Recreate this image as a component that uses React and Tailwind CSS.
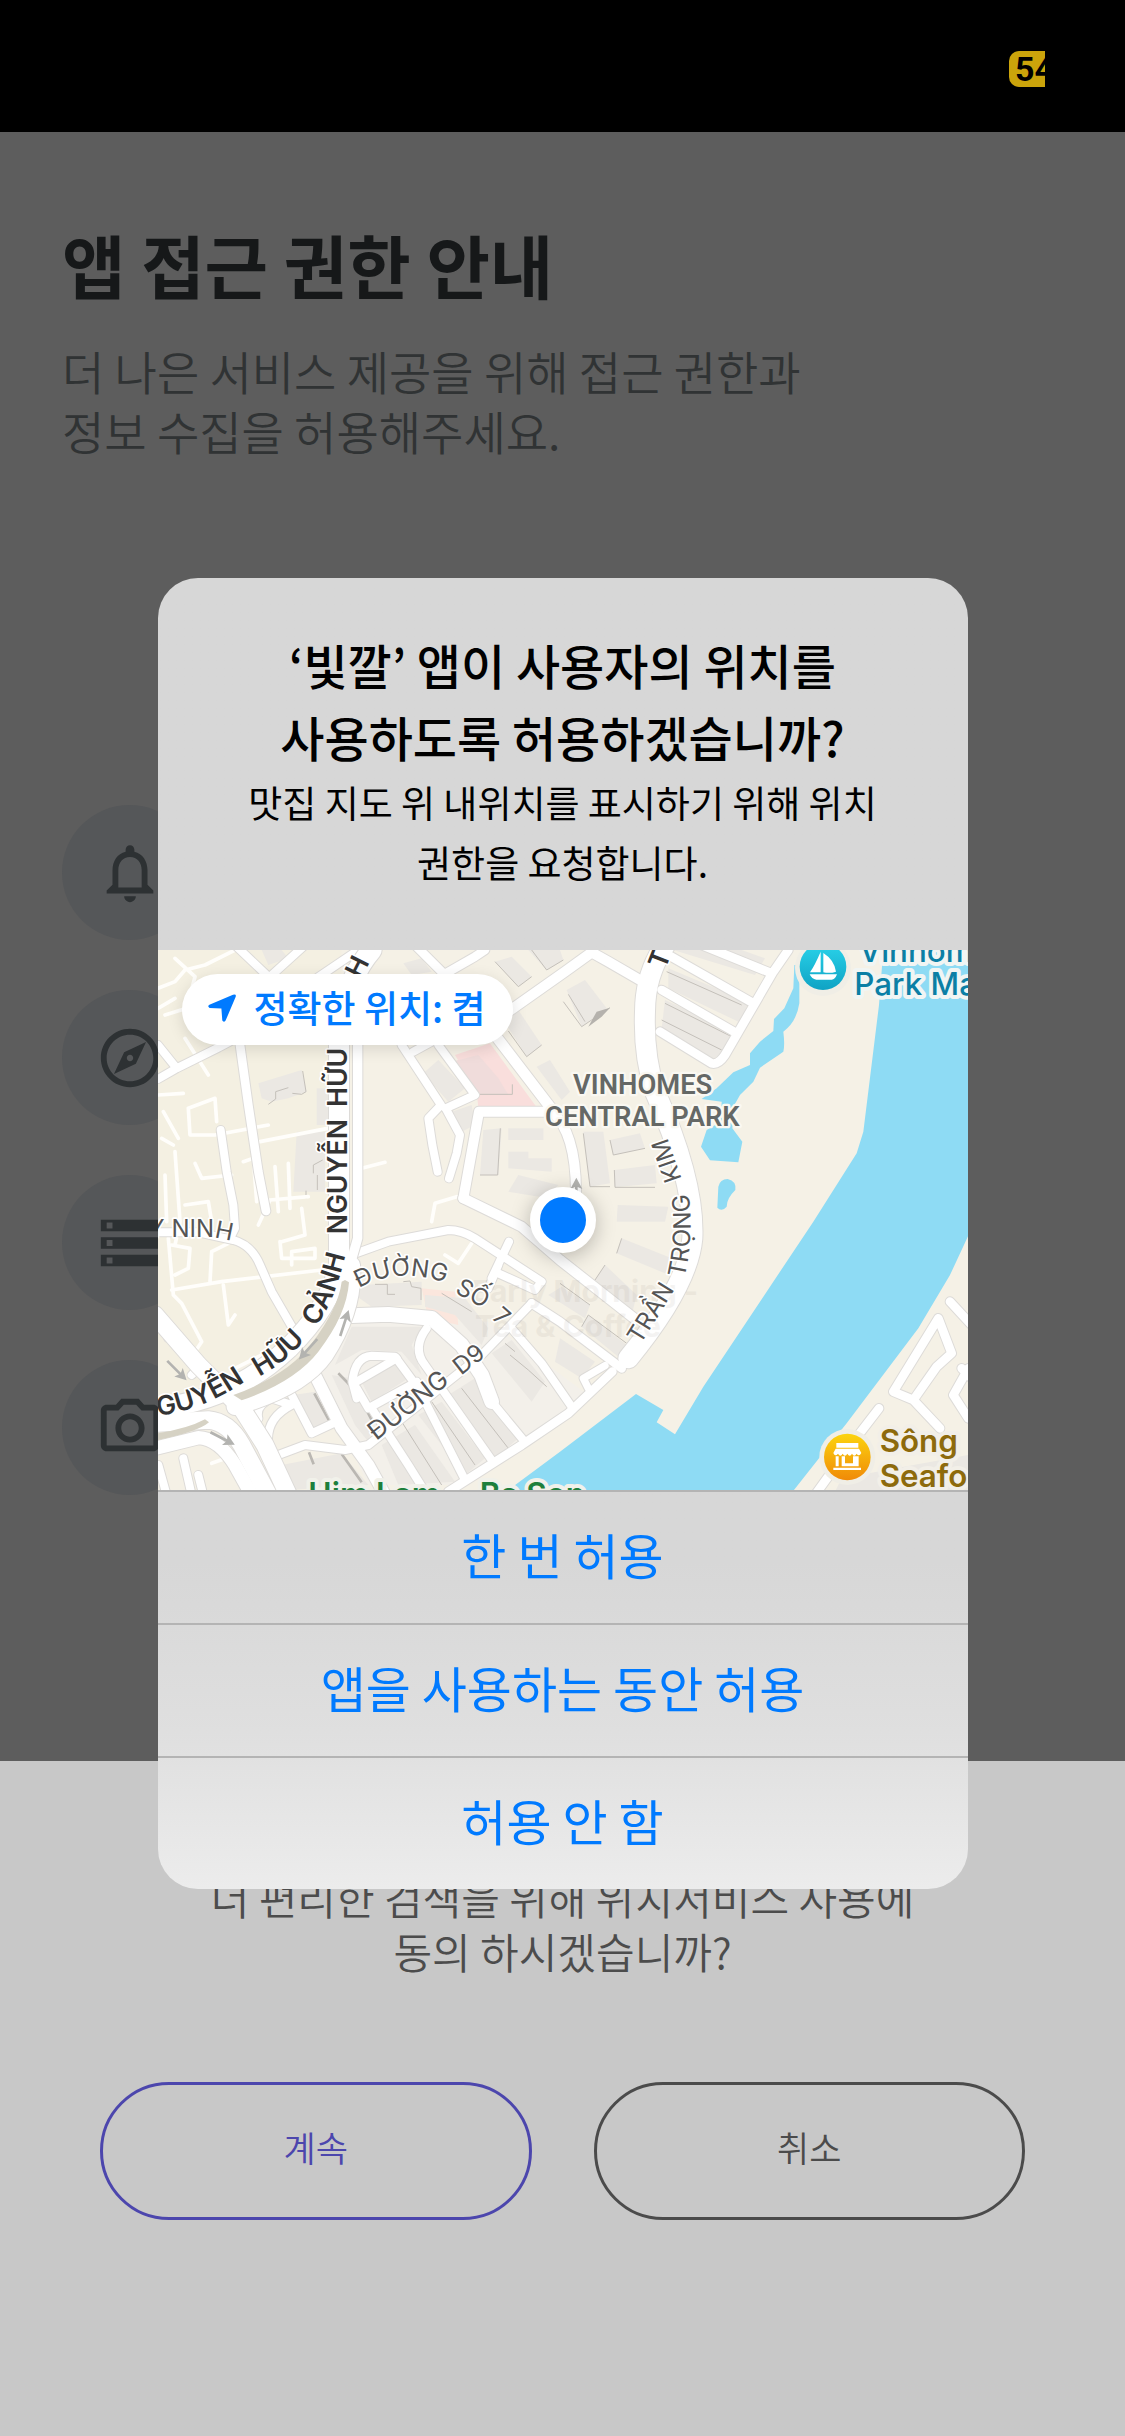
import React from "react";
import {
  MdNotificationsNone,
  MdOutlineExplore,
  MdStorage,
  MdOutlinePhotoCamera,
} from "react-icons/md";

const permissions = [
  { label: "알림", Icon: MdNotificationsNone },
  { label: "위치", Icon: MdOutlineExplore },
  { label: "저장공간", Icon: MdStorage },
  { label: "카메라", Icon: MdOutlinePhotoCamera },
];

const choices = ["한 번 허용", "앱을 사용하는 동안 허용", "허용 안 함"];

const buildings = [
  "M310 415 L440 375 L455 440 L400 460 L350 470 L320 460Z",
  "M425 560 L510 560 L510 740 L415 740Z",
  "M485 430 L520 430 L520 540 L485 540Z",
  "M1020 50 L1070 35 L1130 95 L1090 125Z",
  "M1120 15 L1215 15 L1225 45 L1175 75Z",
  "M1045 225 L1090 195 L1160 300 L1115 335Z",
  "M1145 365 L1185 345 L1245 440 L1220 465Z",
  "M320 15 L380 15 L400 40 L340 60Z",
  "M745 55 L800 40 L830 80 L770 90Z",
  "M805 385 L850 345 L930 430 L880 470Z",
  "M890 500 L950 480 L960 540 L920 560Z",
  "M985 555 L1040 550 L1030 690 L975 690Z",
  "M1060 550 L1165 550 L1165 585 L1060 585Z",
  "M1060 620 L1120 620 L1120 640 L1190 640 L1190 680 L1060 670Z",
  "M1090 690 L1210 720 L1180 760 L1060 740Z",
  "M1235 135 L1290 105 L1355 190 L1280 245Z",
  "M1285 560 L1345 560 L1365 715 L1305 725Z",
  "M1365 585 L1455 565 L1470 610 L1375 630Z",
  "M1378 675 L1500 660 L1505 715 L1380 727Z",
  "M1388 780 L1540 785 L1530 830 L1385 830Z",
  "M1400 880 L1550 940 L1530 985 L1385 925Z",
  "M1350 960 L1445 1050 L1430 1110 L1320 1005Z",
  "M1300 1110 L1415 1200 L1395 1240 L1280 1145Z",
  "M1220 1025 L1305 1080 L1290 1120 L1180 1050Z",
  "M1540 70 L1780 170 L1760 235 L1540 130Z",
  "M1555 15 L1760 15 L1830 40 L1800 90Z",
  "M1530 165 L1740 260 L1710 320 L1660 350 L1520 250Z",
  "M600 1050 L620 1020 L800 1010 L800 1080 L650 1085Z",
  "M810 1050 L930 1060 L1000 1150 L980 1200 L900 1110 L810 1085Z",
  "M590 1145 L800 1145 L770 1200 L800 1290 L740 1220 L620 1215 L540 1260Z",
  "M530 1290 L590 1300 L655 1430 L640 1490 L600 1440Z",
  "M415 1350 L480 1340 L530 1430 L475 1455Z",
  "M620 1310 L720 1245 L760 1300 L650 1370Z",
  "M680 1500 L780 1440 L900 1610 L730 1620Z",
  "M790 1410 L860 1370 L990 1540 L930 1590Z",
  "M880 1350 L960 1300 L1090 1480 L1020 1540Z",
  "M1010 1225 L1070 1185 L1170 1310 L1130 1370Z",
  "M380 1560 L560 1525 L640 1620 L400 1635Z",
  "M1215 1180 L1320 1250 L1280 1300 L1200 1250Z",
  "M2060 1600 L2440 1530 L2440 1640 L2040 1640Z",
];

const buildingEdges = [
  "M340 478 L362 462 V440 L400 428 M443 378 L453 440 L440 448 L412 445",
  "M475 685 V660 L503 645 M487 690 V735 M453 737 V760",
  "M1020 50 L1090 125 L1130 95 M1130 15 L1175 75 L1225 45",
  "M1060 258 L1115 335 L1160 300 M975 448 H1072 V418",
  "M1036 550 L1028 690 H975 M1240 148 L1290 230 M1225 170 L1280 245 L1365 188",
  "M1365 585 L1375 630 L1470 610 M1378 675 L1380 727 H1500 M1285 565 L1305 725 H1365",
  "M1320 1005 L1350 960 M1280 1145 L1300 1110 L1415 1195 M1215 1015 L1305 1080 M1385 925 L1400 880",
  "M660 1018 H697 V1048 H720 M745 1010 L765 1008 L770 1025 L798 1030 V1065",
  "M860 1045 L950 1100 M1050 1195 L1080 1220 M1065 1230 L1120 1275 L1175 1325",
  "M1540 35 L1770 150 M1535 80 L1760 180 M1530 175 L1730 275 M1520 225 L1700 315",
  "M740 1430 L860 1620 M830 1370 L960 1560 M920 1330 L1060 1510",
];

const minorRoads = [
  "M9 130 L60 110 L90 75 L150 60 L240 15 M60 40 L120 95 L95 190 L30 210 M9 190 L60 160",
  "M90 280 L160 390 M9 450 L85 445 M25 500 L70 580 M20 580 L55 600",
  "M100 490 L180 460 L185 530 M100 490 L105 570 L180 570 L340 540",
  "M60 620 L75 830 L60 900 M120 655 L140 700 L230 690 M30 690 L35 830",
  "M90 780 L160 770 L170 830 M265 650 L295 640 L305 770 M315 590 L545 545 M620 670 L690 652",
  "M360 665 L370 800 M400 655 L405 790 M310 840 L345 765 L460 755",
  "M40 880 L55 1050 L80 1075 L140 1190 L100 1250 L125 1290 M60 990 L100 970 L105 910 L50 900",
  "M50 1035 L200 1010 L500 975 M165 1010 L170 920 L220 895 M205 1020 L220 1140 L240 1110",
  "M380 890 L450 870 M410 960 V920 L480 910 V940 H380 L375 890 M440 790 L450 870",
  "M830 830 L840 775 L905 755 M870 930 L910 955 L950 895 M240 1270 L420 1180",
  "M170 1555 L225 1535",
];

const roads = [
  { w: 24, d: "M9 300 L65 370 M9 402 L65 370 L190 308 L262 270" },
  { w: 24, d: "M240 0 L340 95 M450 0 L345 95 M470 110 L610 15" },
  { w: 26, d: "M255 300 L280 480 L310 680 L333 798" },
  { w: 24, d: "M197 555 L215 680 L235 780 L240 850 L225 880" },
  { w: 24, d: "M0 862 H130 L235 885 Q290 900 315 960 L350 1040 L425 1170" },
  { w: 26, d: "M780 0 L868 88 L960 35 L990 15 M868 88 L800 150" },
  { w: 30, d: "M1060 200 L1230 80 L1310 22 L1360 50 L1460 108" },
  { w: 32, d: "M1020 270 L1190 492" },
  { w: 24, d: "M740 300 L858 480 L820 520 L832 600 L848 680 M872 490 L915 570 L905 625 L882 700" },
  { w: 24, d: "M850 300 L960 450 L872 490 M775 320 L830 290" },
  { w: 30, d: "M925 760 L972 500 H1190 Q1262 560 1263 740" },
  { w: 30, d: "M925 760 L1100 845 L1215 945 L1440 1122" },
  { w: 24, d: "M595 928 L700 890 L880 855 Q920 855 960 880 L1160 1010 L1140 1035 L1030 985" },
  { w: 24, d: "M1062 890 L1010 1000 M1030 960 L1000 1030" },
  { w: 44, d: "M590 1112 L700 1108 L830 1120 L920 1200 L980 1290 L1010 1370" },
  { w: 24, d: "M1010 1370 L1105 1485" },
  { w: 24, d: "M815 1150 Q770 1210 810 1260 L1010 1545" },
  { w: 24, d: "M605 1360 L592 1310 Q600 1235 650 1232 L720 1235 L790 1330 L925 1595" },
  { w: 24, d: "M605 1330 L640 1390 M640 1390 L785 1310 M605 1310 L725 1240 M650 1390 L760 1560 L810 1640" },
  { w: 36, d: "M480 1290 L560 1450 L640 1560 L690 1650" },
  { w: 24, d: "M370 1530 L450 1500 L570 1515 L640 1500 L980 1230 L1130 1075" },
  { w: 26, d: "M1130 1075 L1215 1130 L1400 1270" },
  { w: 24, d: "M1065 1145 L1160 1255 L1250 1385" },
  { w: 26, d: "M880 1640 L1100 1500 L1240 1405 L1372 1280" },
  { w: 22, d: "M1300 1330 L1285 1300 L1350 1262" },
  { w: 24, d: "M410 1350 L470 1465 L545 1430 M310 1420 Q300 1380 350 1360 L410 1380 Q330 1420 340 1500" },
  { w: 24, d: "M0 1115 L60 1160 L40 1180 M130 1270 L110 1290" },
  { w: 24, d: "M85 1540 L110 1650 M130 1590 L145 1650 M10 1560 L35 1650" },
  { w: 60, d: "M1530 0 Q1470 90 1470 200 Q1465 330 1500 440 Q1620 710 1612 880 Q1600 1020 1420 1240" },
  { w: 26, d: "M1515 260 L1670 355 Q1690 360 1710 330 L1855 80 L1900 15 M1520 135 L1740 262 M1540 30 L1790 172 M1640 0 L1850 85" },
  { w: 26, d: "M2385 1070 L2450 1140 M2350 1120 L2215 1340 L2275 1365 L2355 1450 M2350 1120 L2390 1225 L2345 1265 L2275 1365" },
  { w: 26, d: "M2172 1390 L2095 1490 L1980 1650 M2440 1270 L2395 1350 L2440 1420 M2420 1270 L2450 1300" },
];

const avenue = [
  { w: 60, d: "M0 1390 Q230 1370 400 1210 Q530 1080 552 960 V300 Q560 120 650 15" },
  { w: 28, d: "M608 180 V880 L585 960" },
  { w: 50, d: "M590 960 Q600 1090 510 1230 Q440 1330 240 1385" },
  { w: 52, d: "M0 1435 L160 1425 Q220 1430 260 1500 L340 1650" },
  { w: 52, d: "M0 1110 L130 1260 L260 1390 L330 1500 L400 1650" },
  { w: 40, d: "M0 1510 L130 1478 Q190 1480 240 1560 L290 1650" },
];

function Roads({ items }) {
  return (
    <g fill="none" strokeLinecap="round" strokeLinejoin="round">
      {items.map((r) => (
        <path key={r.d} d={r.d} stroke="#dddbd8" strokeWidth={r.w + 6} />
      ))}
      {items.map((r) => (
        <path key={r.d} d={r.d} stroke="#ffffff" strokeWidth={r.w} />
      ))}
    </g>
  );
}

function Arrow({ x, y, angle }) {
  return (
    <g transform={`translate(${x} ${y}) rotate(${angle})`} fill="#b3b3b0">
      <path d="M-40 -4 H14 L8 -18 L42 0 L8 18 L14 4 H-40Z" />
    </g>
  );
}

function CurvedLabel({ id, size, bold, children }) {
  return (
    <text
      fontSize={size}
      fontWeight={bold ? 600 : 400}
      fill={bold ? "#333333" : "#555555"}
      stroke="#ffffff"
      strokeWidth="10"
      strokeLinejoin="round"
      paintOrder="stroke"
    >
      <textPath href={`#${id}`}>{children}</textPath>
    </text>
  );
}

function LocationMap() {
  return (
    <svg
      className="block h-full w-full"
      viewBox="9 15 2430 1620"
      preserveAspectRatio="xMidYMid slice"
      role="img"
      aria-label="현재 위치 지도"
      fontFamily="Inter, 'Noto Sans', sans-serif"
    >
      <defs>
        <linearGradient id="marina" x1="0" y1="0" x2="0" y2="1">
          <stop offset="0" stopColor="#2ad3ea" />
          <stop offset="1" stopColor="#0fa3c4" />
        </linearGradient>
        <linearGradient id="market" x1="0" y1="0" x2="0" y2="1">
          <stop offset="0" stopColor="#fcd40f" />
          <stop offset="1" stopColor="#f08a08" />
        </linearGradient>
        <path id="ninh" d="M-20 877 L170 877 Q230 882 300 915" />
        <path id="canh1" d="M482 1146 Q545 1060 576 905" />
        <path id="canh2" d="M312 1294 Q400 1250 470 1160" />
        <path id="canh3" d="M8 1412 Q160 1396 310 1280" />
        <path id="nguyen" d="M575 868 V490" />
        <path id="huu" d="M577 486 V250" />
        <path id="h" d="M618 104 L660 20" />
        <path id="so" d="M612 1030 Q730 960 890 1020" />
        <path id="so2" d="M898 1042 L1040 1120" />
        <path id="so3" d="M1008 1120 L1060 1165" />
        <path id="d9" d="M664 1488 L900 1302" />
        <path id="d9b" d="M918 1292 L1020 1212" />
        <path id="tran" d="M1456 1200 L1580 1000" />
        <path id="trong" d="M1588 1000 Q1620 860 1598 730" />
        <path id="kim" d="M1580 702 L1520 530" />
        <path id="t" d="M1530 76 L1560 0" />
      </defs>

      <rect x="0" y="0" width="2450" height="1650" fill="#f5f1e6" />
      <path d="M0 0 H560 V1000 L400 1200 L0 1380Z" fill="#f4f0e2" />
      <path
        d="M600 1130 L1000 1130 L1300 1350 L900 1620 L640 1620 L480 1290Z"
        fill="#f3f0ea"
      />
      <path d="M900 330 L1005 295 L1145 487 H970 L965 440Z" fill="#f9dedc" />
      <path d="M890 350 L970 330 L1030 400 L1060 450 L975 448Z" fill="#f0dcdb" />
      <path d="M800 1030 L900 1040 L910 1140 L820 1120Z" fill="#fbe6dd" />
      <g fill="#ebe8e3">
        {buildings.map((d) => (
          <path key={d} d={d} />
        ))}
      </g>
      <g fill="none" stroke="#c4c0ba" strokeWidth="3">
        {buildingEdges.map((d) => (
          <path key={d} d={d} />
        ))}
      </g>
      <path
        d="M550 1285 Q610 1340 650 1425 M478 1345 L524 1430 M462 1522 L476 1558 M560 1527 L620 1612"
        fill="none"
        stroke="#bab7b2"
        strokeWidth="8"
      />
      <path d="M1300 245 L1325 200 L1365 188 L1340 215Z" fill="#b5b2ad" />
      <g
        fill="none"
        stroke="#fffefb"
        strokeWidth="11"
        strokeLinecap="round"
        strokeLinejoin="round"
      >
        {minorRoads.map((d) => (
          <path key={d} d={d} />
        ))}
      </g>

      <g fill="#8edbf4">
        <path d="M2186 0 L2172 180 L2125 560 L2105 625 L1975 830 L1775 1130 L1645 1325 L1560 1468 L1505 1432 L1525 1395 L1443 1347 L1215 1520 L1040 1650 H1905 L2075 1435 L2290 1150 L2385 990 L2450 850 V0Z" />
        <path d="M1933 60 L1933 175 Q1925 230 1885 260 Q1890 300 1885 320 L1815 368 L1795 410 L1755 450 L1738 480 L1732 550 L1762 590 L1750 652 L1665 646 L1638 605 L1655 555 L1697 530 L1700 470 L1640 462 L1685 430 L1735 382 L1785 360 L1785 325 L1815 290 L1855 258 L1857 222 L1888 190 L1915 130 L1918 60Z" />
        <path d="M1690 725 Q1695 702 1718 702 Q1745 708 1741 735 Q1715 760 1715 785 Q1700 802 1687 788Z" />
      </g>

      <Roads items={roads} />
      <Roads items={avenue} />
      <path
        d="M570 1005 L582 1012 Q575 1110 490 1220 Q420 1310 260 1366 L235 1350 Q400 1290 470 1195 Q550 1090 560 1010Z"
        fill="#d6d2c4"
      />
      <path d="M9 1465 Q100 1450 150 1423 L162 1432 Q130 1460 9 1485Z" fill="#d6d2c4" />

      <Arrow x={65} y={1276} angle={45} />
      <Arrow x={202} y={1480} angle={27} />
      <Arrow x={460} y={1212} angle={132} />
      <Arrow x={568} y={1135} angle={-72} />
      <Arrow x={1264} y={740} angle={-90} />

      <g fill="#8c8378" opacity="0.09" fontSize="90" fontWeight="700">
        <text x="950" y="1072">Early Morning -</text>
        <text x="960" y="1175">Tea &amp; Coffee</text>
      </g>

      <CurvedLabel id="ninh" size={72}>Y NINH</CurvedLabel>
      <CurvedLabel id="canh3" size={80} bold>GUYỄN</CurvedLabel>
      <CurvedLabel id="canh2" size={80} bold>HỮU</CurvedLabel>
      <CurvedLabel id="canh1" size={80} bold>CẢNH</CurvedLabel>
      <CurvedLabel id="nguyen" size={80} bold>NGUYỄN</CurvedLabel>
      <CurvedLabel id="huu" size={80} bold>HỮU</CurvedLabel>
      <CurvedLabel id="h" size={80} bold>H</CurvedLabel>
      <CurvedLabel id="so" size={72}>ĐƯỜNG</CurvedLabel>
      <CurvedLabel id="so2" size={72}>SỐ</CurvedLabel>
      <CurvedLabel id="so3" size={72}>7</CurvedLabel>
      <CurvedLabel id="d9" size={76}>ĐƯỜNG</CurvedLabel>
      <CurvedLabel id="d9b" size={72}>D9</CurvedLabel>
      <CurvedLabel id="tran" size={72}>TRẦN</CurvedLabel>
      <CurvedLabel id="trong" size={72}>TRỌNG</CurvedLabel>
      <CurvedLabel id="kim" size={72}>KIM</CurvedLabel>
      <CurvedLabel id="t" size={80} bold>T</CurvedLabel>

      <g
        fontFamily="Roboto, sans-serif"
        fontSize="82"
        fontWeight="600"
        fill="#656866"
        stroke="#faf8f2"
        strokeWidth="14"
        strokeLinejoin="round"
        paintOrder="stroke"
        textAnchor="middle"
      >
        <text x="1463" y="448">VINHOMES</text>
        <text x="1462" y="542">CENTRAL PARK</text>
      </g>

      <g strokeWidth="24" strokeLinejoin="round" paintOrder="stroke" fontSize="94">
        <g fill="#0b7fa5" stroke="#f1f5f3" fontWeight="500">
          <text x="2112" y="51">Vinhomes</text>
          <text x="2098" y="151">Park Marina</text>
        </g>
        <g fill="#8d6a0c" stroke="#f2efe8" fontWeight="600">
          <text x="2174" y="1522">Sông</text>
          <text x="2174" y="1625">Seafood</text>
        </g>
        <g fill="#1d7f3c" stroke="#f1f1ea" fontWeight="600">
          <text x="460" y="1681">Him Lam</text>
          <text x="974" y="1681">Ba Son</text>
        </g>
      </g>

      <g>
        <circle cx="2004" cy="69" r="84" fill="#f0eee6" />
        <circle cx="2004" cy="65" r="70" fill="url(#marina)" />
        <path
          d="M1997 20 V82 H1965 Q1980 60 1997 20Z M2005 24 Q2038 45 2043 80 Q2025 86 2005 82Z M1964 88 H2046 Q2040 104 2030 104 H1984 Q1970 102 1964 88Z"
          fill="#ffffff"
        />
      </g>
      <g>
        <circle cx="2077" cy="1536" r="84" fill="#f0eee6" />
        <circle cx="2077" cy="1536" r="70" fill="url(#market)" />
        <path
          d="M2044 1494 H2110 V1508 H2044Z M2042 1511 H2112 L2119 1524 Q2112 1536 2105 1526 Q2098 1538 2091 1526 Q2084 1538 2077 1526 Q2070 1538 2063 1526 Q2056 1538 2049 1526 Q2040 1536 2035 1524Z M2042 1534 H2051 V1564 H2042Z M2102 1534 H2111 V1564 H2102Z M2060 1534 H2070 V1555 H2094 V1534 H2102 V1564 H2060Z M2035 1568 H2118 V1575 H2035Z"
          fill="#ffffff"
        />
      </g>
    </svg>
  );
}

export default function App() {
  return (
    <div className="relative flex min-h-screen flex-col bg-[#5d5d5d] font-['Noto_Sans_CJK_KR',sans-serif]">
      <header className="flex h-[132px] items-start justify-end bg-black pt-[51px] pr-20">
        <div className="h-9 w-9 overflow-hidden rounded-l-[10px] bg-[#cba40b] pl-1.5 font-[Roboto] text-[34px] leading-9 font-bold whitespace-nowrap text-black">
          54
        </div>
      </header>

      <main className="px-[62px] pt-[84px] pb-[266px]">
        <h1 className="text-[69px] leading-[96px] font-bold text-[#161819]">
          앱 접근 권한 안내
        </h1>
        <p className="mt-7 text-[46px] leading-[60px] font-[350] text-[#303334]">
          더 나은 서비스 제공을 위해 접근 권한과
          <br />
          정보 수집을 허용해주세요.
        </p>
        <ul className="mt-[345px] flex flex-col gap-[50px]">
          {permissions.map(({ label, Icon }) => (
            <li
              key={label}
              aria-label={label}
              className="flex size-[135px] items-center justify-center rounded-full bg-[#555759]"
            >
              <Icon className="size-[70px] text-[#2d3133]" aria-hidden="true" />
            </li>
          ))}
        </ul>
      </main>

      <section className="flex-1 bg-[#c8c8c8] px-[100px] pt-[109px] pb-[215px] text-center">
        <p className="text-[42px] leading-[54px] font-[350] text-[#4c4c4c]">
          더 편리한 검색을 위해 위치서비스 사용에
          <br />
          동의 하시겠습니까?
        </p>
        <div className="mt-[104px] grid grid-cols-2 gap-[62px]">
          <button
            type="button"
            className="h-[138px] rounded-full border-[3px] border-[#4c46ad] pb-2 text-[35px] font-[350] text-[#4c46ad]"
          >
            계속
          </button>
          <button
            type="button"
            className="h-[138px] rounded-full border-[3px] border-[#4b4b4b] pb-2 text-[35px] font-[350] text-[#4b4b4b]"
          >
            취소
          </button>
        </div>
      </section>

      <div className="absolute inset-x-0 top-[578px] flex justify-center">
        <div
          role="alertdialog"
          aria-labelledby="alert-title"
          aria-describedby="alert-text"
          className="w-[72%] overflow-hidden rounded-[40px] bg-linear-to-b from-[#d7d7d7] from-75% via-[#dfdfdf] via-88% to-[#ececec] text-center"
        >
          <div className="flex h-[372px] flex-col pt-[50px] text-black">
            <h2 id="alert-title" className="text-[48px] leading-[72px] font-medium">
              ‘빛깔’ 앱이 사용자의 위치를
              <br />
              사용하도록 허용하겠습니까?
            </h2>
            <p id="alert-text" className="text-[37px] leading-[60px]">
              맛집 지도 위 내위치를 표시하기 위해 위치
              <br />
              권한을 요청합니다.
            </p>
          </div>

          <div className="relative h-[540px]">
            <LocationMap />
            <button
              type="button"
              className="absolute top-6 left-6 flex h-[71px] items-center gap-[18px] rounded-full bg-white pr-7 pb-1 pl-[26px] text-[37px] leading-none font-medium text-[#007aff] shadow-[0_4px_16px_rgba(0,0,0,0.12)]"
            >
              <svg viewBox="0 0 28 28" className="size-7" aria-hidden="true">
                <path
                  d="M26.5 0.5 Q28.5 0.5 27.6 3 L17.6 26.6 Q16.2 29 14.3 26.4 L13.4 14.6 L1.6 13.9 Q-1 12.4 1.4 10.8 L25 0.8Z"
                  fill="currentColor"
                />
              </svg>
              <span>정확한 위치: 켬</span>
            </button>
            <div className="absolute inset-0 m-auto size-[66px] rounded-full border-[10px] border-white bg-[#007aff] shadow-[0_4px_20px_rgba(0,0,0,0.25)]" />
          </div>

          {choices.map((choice) => (
            <button
              key={choice}
              type="button"
              className="block h-[133px] w-full border-t-2 border-[#b4b4b4] pb-2 text-[49px] text-[#007aff]"
            >
              {choice}
            </button>
          ))}
        </div>
      </div>
    </div>
  );
}
